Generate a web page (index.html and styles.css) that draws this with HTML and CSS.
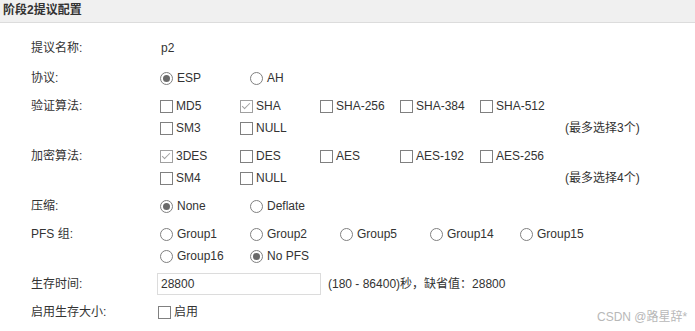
FILE: index.html
```html
<!DOCTYPE html>
<html lang="zh-CN">
<head>
    <meta charset="UTF-8">
    <title>阶段2提议配置</title>
    <link rel="stylesheet" href="styles.css">
</head>
<body>
<div class="panel">
    <div class="panel-title">阶段2提议配置</div>
    <div class="form">
        <div class="row first">
            <span class="label">提议名称:</span>
            <div class="value"><span class="text">p2</span></div>
        </div>
        <div class="row">
            <span class="label">协议:</span>
            <div class="value radios">
                <label class="opt"><input type="radio" name="proto" checked> ESP</label>
                <label class="opt"><input type="radio" name="proto"> AH</label>
            </div>
        </div>
        <div class="row">
            <span class="label">验证算法:</span>
            <div class="value checks">
                <label class="opt"><input type="checkbox"> MD5</label>
                <label class="opt"><input type="checkbox" checked> SHA</label>
                <label class="opt"><input type="checkbox"> SHA-256</label>
                <label class="opt"><input type="checkbox"> SHA-384</label>
                <label class="opt"><input type="checkbox"> SHA-512</label>
                <label class="opt"><input type="checkbox"> SM3</label>
                <label class="opt"><input type="checkbox"> NULL</label>
                <span class="hint">(最多选择3个)</span>
            </div>
        </div>
        <div class="row">
            <span class="label">加密算法:</span>
            <div class="value checks">
                <label class="opt"><input type="checkbox" checked> 3DES</label>
                <label class="opt"><input type="checkbox"> DES</label>
                <label class="opt"><input type="checkbox"> AES</label>
                <label class="opt"><input type="checkbox"> AES-192</label>
                <label class="opt"><input type="checkbox"> AES-256</label>
                <label class="opt"><input type="checkbox"> SM4</label>
                <label class="opt"><input type="checkbox"> NULL</label>
                <span class="hint">(最多选择4个)</span>
            </div>
        </div>
        <div class="row">
            <span class="label">压缩:</span>
            <div class="value radios">
                <label class="opt"><input type="radio" name="comp" checked> None</label>
                <label class="opt"><input type="radio" name="comp"> Deflate</label>
            </div>
        </div>
        <div class="row">
            <span class="label">PFS 组:</span>
            <div class="value radios">
                <label class="opt"><input type="radio" name="pfs"> Group1</label>
                <label class="opt"><input type="radio" name="pfs"> Group2</label>
                <label class="opt"><input type="radio" name="pfs"> Group5</label>
                <label class="opt"><input type="radio" name="pfs"> Group14</label>
                <label class="opt"><input type="radio" name="pfs"> Group15</label>
                <label class="opt"><input type="radio" name="pfs"> Group16</label>
                <label class="opt"><input type="radio" name="pfs" checked> No PFS</label>
            </div>
        </div>
        <div class="row">
            <span class="label">生存时间:</span>
            <div class="value inline">
                <input class="field" type="text" value="28800">
                <span class="tip">(180 - 86400)秒，缺省值：28800</span>
            </div>
        </div>
        <div class="row">
            <span class="label">启用生存大小:</span>
            <div class="value inline">
                <label class="opt single"><input type="checkbox"> 启用</label>
            </div>
        </div>
    </div>
</div>
<div class="watermark">CSDN @路星辞*</div>
</body>
</html>
```

FILE: styles.css
```css
body {
    margin: 0;
    background: #fff;
    color: #333;
    font-family: "Liberation Sans", Arial, "Noto Sans CJK SC", sans-serif;
    font-size: 12px;
}
.panel-title {
    height: 22px;
    line-height: 20px;
    padding-left: 3px;
    background: #f0f0f0;
    border-bottom: 1px solid #dcdcdc;
    font-weight: bold;
    font-size: 12px;
    color: #333;
}
.form {
    padding-top: 14px;
}
.row {
    display: flex;
    margin-bottom: 6px;
    line-height: 22px;
}
.row.first {
    margin-bottom: 8px;
}
.label {
    width: 126px;
    padding-left: 31px;
    flex-shrink: 0;
}
.value .text {
    padding-left: 1px;
}
.value {
    padding-left: 3px;
}
.checks {
    display: grid;
    grid-template-columns: repeat(5, 80px) auto;
}
.checks .opt:nth-of-type(6) {
    grid-column: 1;
}
.checks .hint {
    grid-column: 6;
    padding-left: 5px;
}
.radios {
    display: grid;
    grid-template-columns: repeat(5, 90px);
}
.opt {
    display: flex;
    align-items: center;
    white-space: nowrap;
}
.opt input {
    appearance: none;
    -webkit-appearance: none;
    margin: 0 3px 0 0;
    width: 13px;
    height: 13px;
    border: 1px solid #808080;
    background: #fff;
    position: relative;
    box-sizing: border-box;
}
.opt input[type="radio"] {
    border-radius: 50%;
    margin-right: 4px;
}
.opt input[type="radio"]:checked::after {
    content: "";
    position: absolute;
    left: 2px;
    top: 2px;
    width: 7px;
    height: 7px;
    border-radius: 50%;
    background: #6a6a6a;
}
.opt input[type="checkbox"]:checked {
    border-color: #a0a0a0;
}
.opt input[type="checkbox"]:checked::after {
    content: "";
    position: absolute;
    left: 3px;
    top: 0px;
    width: 3px;
    height: 7px;
    border: solid #a0a0a0;
    border-width: 0 1px 1px 0;
    transform: rotate(45deg);
}
.inline {
    display: flex;
    align-items: center;
    padding-left: 0;
}
.field {
    width: 164px;
    height: 22px;
    box-sizing: border-box;
    border: 1px solid #dcdcdc;
    padding: 0 3px;
    margin: 0;
    font: inherit;
    color: #333;
    outline: none;
}
.tip {
    margin-left: 7px;
}
.single {
    padding-left: 1px;
}
.watermark {
    position: absolute;
    left: 597px;
    top: 307px;
    color: #b8b8b8;
    font-size: 12px;
    font-family: "Liberation Sans", "Noto Sans CJK SC", sans-serif;
}
```
